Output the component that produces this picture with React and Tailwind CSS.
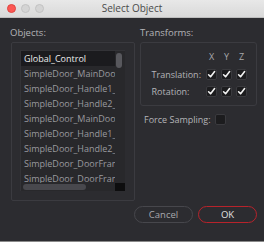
import React from 'react';

const objects = [
  'Global_Control',
  'SimpleDoor_MainDoor',
  'SimpleDoor_Handle1_',
  'SimpleDoor_Handle2_',
  'SimpleDoor_MainDoor',
  'SimpleDoor_Handle1_',
  'SimpleDoor_Handle2_',
  'SimpleDoor_DoorFrame',
  'SimpleDoor_DoorFrame',
];

const Check = ({ checked }) => (
  <div className="w-[11px] h-[11px] rounded-[2px] bg-[#1c1c1e] border border-[#3a3a3e] flex items-center justify-center">
    {checked && (
      <svg width="9" height="9" viewBox="0 0 9 9">
        <path d="M1.6 4.8 L3.6 6.8 L7.6 1.6" fill="none" stroke="#f2f2f2" strokeWidth="1.6" strokeLinecap="round" strokeLinejoin="round" />
      </svg>
    )}
  </div>
);

export default function App() {
  return (
    <div className="w-[264px] h-[242px] bg-[#2c2c30] flex flex-col overflow-hidden border-b border-[#8a8a8a]" style={{ fontFamily: '"Open Sans", sans-serif' }}>
      {/* title bar */}
      <div className="h-[18px] shrink-0 bg-gradient-to-b from-[#e8e8e8] to-[#d9d9d9] border-b border-[#bdbdbd] flex items-center relative">
        <div className="flex items-center gap-[5px] pl-[7px]">
          <span className="w-[9px] h-[9px] rounded-full bg-[#fc5753] border border-[#de4641]" />
          <span className="w-[9px] h-[9px] rounded-full bg-[#d4d4d4] border border-[#c2c2c2]" />
          <span className="w-[9px] h-[9px] rounded-full bg-[#d4d4d4] border border-[#c2c2c2]" />
        </div>
        <div className="absolute inset-0 flex items-center justify-center text-[10px] text-[#4a4a4a]">Select Object</div>
      </div>

      {/* body */}
      <div className="flex-1 flex flex-col pl-[11px] pt-[7px]">
        <div className="flex gap-[5px]">
          {/* objects */}
          <div className="w-[124px] flex flex-col">
            <div className="h-[15px] text-[9.5px] leading-[15px] text-[#b4b4b8] -ml-px">Objects:</div>
            <div className="mt-[2px] h-[159px] border border-[#3b3b40] rounded-[2px] pl-[8px] pr-[9px] pt-[7px] pb-[9px]">
              <div className="h-full bg-[#28282b] border-l border-t border-[#333337] flex flex-col">
                <div className="flex-1 flex min-h-0">
                  <div className="flex-1 min-w-0 overflow-hidden flex flex-col">
                    {objects.map((name, i) => (
                      <div
                        key={i}
                        className={`h-[15px] shrink-0 pl-[3px] text-[9px] leading-[15px] whitespace-nowrap ${i === 0 ? 'bg-[#1b1b1e] text-[#ececec]' : 'text-[#9a9a9f]'}`}
                      >
                        {name}
                      </div>
                    ))}
                  </div>
                  <div className="w-[10px] shrink-0 pt-[2px] pl-[1px]">
                    <div className="w-[6px] h-[15px] rounded-full bg-[#58585d]" />
                  </div>
                </div>
                <div className="h-[8px] shrink-0 flex items-center">
                  <div className="ml-[2px] w-[63px] h-[6px] rounded-full bg-[#48484d]" />
                  <div className="ml-auto w-[10px] h-[8px] bg-[#0d0d0e]" />
                </div>
              </div>
            </div>
          </div>

          {/* transforms */}
          <div className="w-[117px] flex flex-col">
            <div className="h-[15px] text-[9.5px] leading-[15px] text-[#b4b4b8]">Transforms:</div>
            <div className="mt-[2px] h-[64px] border border-[#3b3b40] rounded-[3px] flex justify-end pr-[9px] pt-[9px]">
              <div className="grid grid-cols-[auto_11px_11px_11px] gap-x-[4px] items-center text-[9px] text-[#b4b4b8] self-start">
                <div />
                <div className="text-center leading-[10px] text-[#a8a8ac]">X</div>
                <div className="text-center leading-[10px] text-[#a8a8ac]">Y</div>
                <div className="text-center leading-[10px] text-[#a8a8ac]">Z</div>
                <div className="mt-[7px] leading-[11px] pr-[1px]">Translation:</div>
                <div className="mt-[7px]"><Check checked /></div>
                <div className="mt-[7px]"><Check checked /></div>
                <div className="mt-[7px]"><Check checked /></div>
                <div className="mt-[6px] leading-[11px] pr-[1px]">Rotation:</div>
                <div className="mt-[6px]"><Check checked /></div>
                <div className="mt-[6px]"><Check checked /></div>
                <div className="mt-[6px]"><Check checked /></div>
              </div>
            </div>
            <div className="mt-[8px] pl-[4px] flex items-center gap-[4px] text-[9px] text-[#b4b4b8]">
              <span className="leading-[11px]">Force Sampling:</span>
              <Check />
            </div>
          </div>
        </div>

        {/* buttons */}
        <div className="mt-[5px] flex justify-end gap-[5px] pr-[7px]">
          <button className="w-[59px] h-[17px] rounded-full border border-[#47474c] text-[9.5px] text-[#a8a8ac] leading-none">Cancel</button>
          <button className="w-[59px] h-[17px] rounded-full border border-[#b8232b] text-[9.5px] text-[#e2e2e2] leading-none">OK</button>
        </div>
      </div>
    </div>
  );
}
